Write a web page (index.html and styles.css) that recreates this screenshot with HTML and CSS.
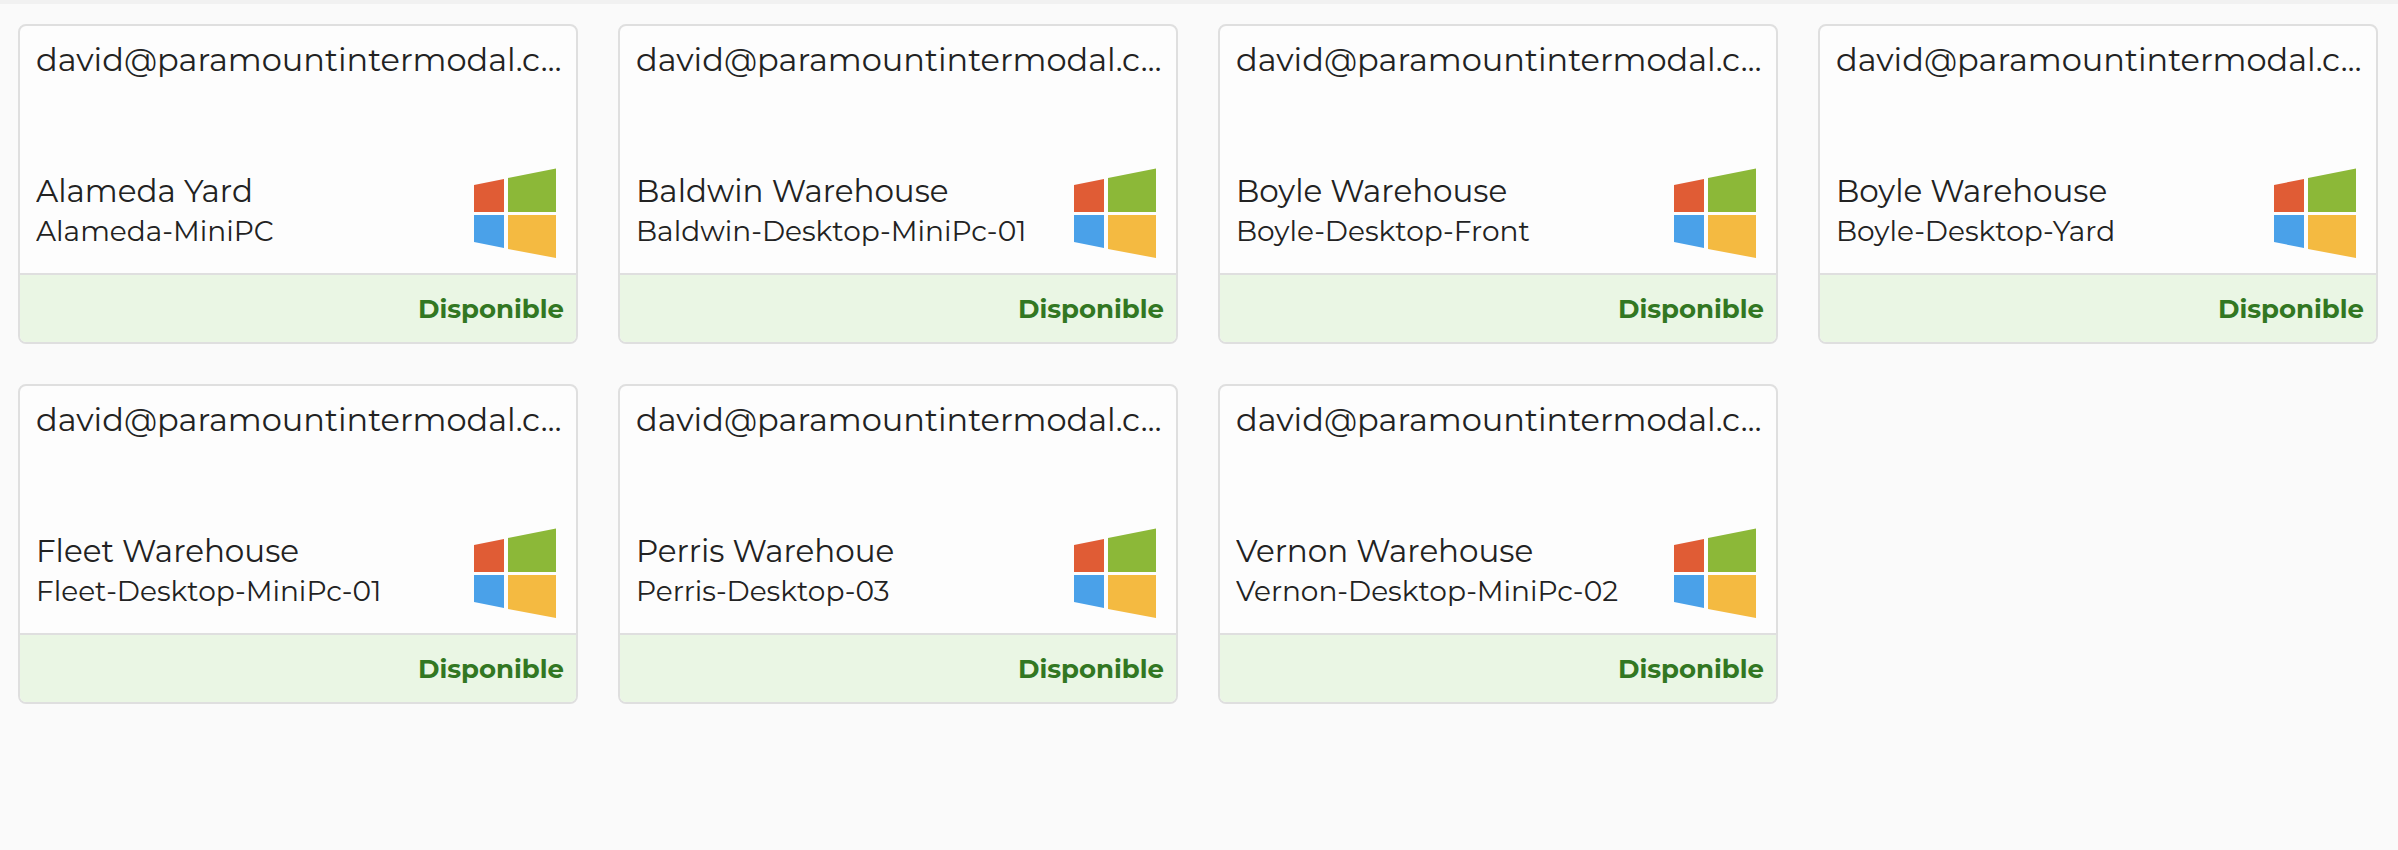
FILE: index.html
```html
<!DOCTYPE html>
<html lang="es">
<head>
<meta charset="utf-8">
<meta name="viewport" content="width=device-width, initial-scale=1">
<title>Equipos</title>
<link rel="stylesheet" href="styles.css">
</head>
<body>
<svg class="sprite" aria-hidden="true">
  <symbol id="windows" viewBox="0 0 82 90">
    <path fill="#e05c35" d="M0 16.5 30 10.5V43.5H0z"/>
    <path fill="#8cb838" d="M34 9.5 82 0V43.5H34z"/>
    <path fill="#4aa1e9" d="M0 46.5H30V79.500L0 73.500z"/>
    <path fill="#f4ba41" d="M34 46.500H82V89.500L34 80.500z"/>
  </symbol>
</svg>
<main class="devices">
  <article class="card">
    <div class="card-body">
      <h2 class="account">david@paramountintermodal.c…</h2>
      <div class="device">
        <div class="names"><p class="name">Alameda Yard</p><p class="host">Alameda-MiniPC</p></div>
        <svg class="os" role="img" aria-label="Windows"><use href="#windows"/></svg>
      </div>
    </div>
    <footer class="status">Disponible</footer>
  </article>
  <article class="card">
    <div class="card-body">
      <h2 class="account">david@paramountintermodal.c…</h2>
      <div class="device">
        <div class="names"><p class="name">Baldwin Warehouse</p><p class="host">Baldwin-Desktop-MiniPc-01</p></div>
        <svg class="os" role="img" aria-label="Windows"><use href="#windows"/></svg>
      </div>
    </div>
    <footer class="status">Disponible</footer>
  </article>
  <article class="card">
    <div class="card-body">
      <h2 class="account">david@paramountintermodal.c…</h2>
      <div class="device">
        <div class="names"><p class="name">Boyle Warehouse</p><p class="host">Boyle-Desktop-Front</p></div>
        <svg class="os" role="img" aria-label="Windows"><use href="#windows"/></svg>
      </div>
    </div>
    <footer class="status">Disponible</footer>
  </article>
  <article class="card">
    <div class="card-body">
      <h2 class="account">david@paramountintermodal.c…</h2>
      <div class="device">
        <div class="names"><p class="name">Boyle Warehouse</p><p class="host">Boyle-Desktop-Yard</p></div>
        <svg class="os" role="img" aria-label="Windows"><use href="#windows"/></svg>
      </div>
    </div>
    <footer class="status">Disponible</footer>
  </article>
  <article class="card">
    <div class="card-body">
      <h2 class="account">david@paramountintermodal.c…</h2>
      <div class="device">
        <div class="names"><p class="name">Fleet Warehouse</p><p class="host">Fleet-Desktop-MiniPc-01</p></div>
        <svg class="os" role="img" aria-label="Windows"><use href="#windows"/></svg>
      </div>
    </div>
    <footer class="status">Disponible</footer>
  </article>
  <article class="card">
    <div class="card-body">
      <h2 class="account">david@paramountintermodal.c…</h2>
      <div class="device">
        <div class="names"><p class="name">Perris Warehoue</p><p class="host">Perris-Desktop-03</p></div>
        <svg class="os" role="img" aria-label="Windows"><use href="#windows"/></svg>
      </div>
    </div>
    <footer class="status">Disponible</footer>
  </article>
  <article class="card">
    <div class="card-body">
      <h2 class="account">david@paramountintermodal.c…</h2>
      <div class="device">
        <div class="names"><p class="name">Vernon Warehouse</p><p class="host">Vernon-Desktop-MiniPc-02</p></div>
        <svg class="os" role="img" aria-label="Windows"><use href="#windows"/></svg>
      </div>
    </div>
    <footer class="status">Disponible</footer>
  </article>
</main>
</body>
</html>
```
FILE: styles.css
```css
* {
  box-sizing: border-box;
}

body {
  margin: 0;
  border-top: 4px solid #f1f1f1;
  background: #fafafa;
  color: #222;
  font-family: Montserrat, Inter, sans-serif;
}

.sprite {
  display: none;
}

.devices {
  display: grid;
  grid-template-columns: repeat(4, minmax(0, 1fr));
  gap: 40px;
  padding: 20px 20px 40px 18px;
}

.card {
  display: flex;
  flex-direction: column;
  overflow: hidden;
  border: 2px solid #dfdfdf;
  border-radius: 8px;
  background: #fdfdfd;
}

.card-body {
  padding: 14px 8px 14px 16px;
}

.account,
.name,
.host {
  margin: 0;
  overflow: hidden;
  font-weight: 400;
  line-height: 40px;
  text-overflow: ellipsis;
  white-space: nowrap;
}

.account {
  font-size: 32px;
}

.name {
  font-size: 31px;
}

.host {
  font-size: 28px;
}

.device {
  display: flex;
  align-items: flex-start;
  justify-content: space-between;
  gap: 16px;
  margin-top: 88px;
  padding-right: 12px;
}

.names {
  min-width: 0;
  padding-top: 3px;
}

.os {
  flex: none;
  width: 82px;
  height: 91px;
}

.status {
  padding: 15px 12px 14px;
  border-top: 2px solid #dfdfdf;
  background: #eaf6e4;
  color: #327722;
  font-size: 26px;
  font-weight: 700;
  line-height: 38px;
  text-align: right;
}
```
